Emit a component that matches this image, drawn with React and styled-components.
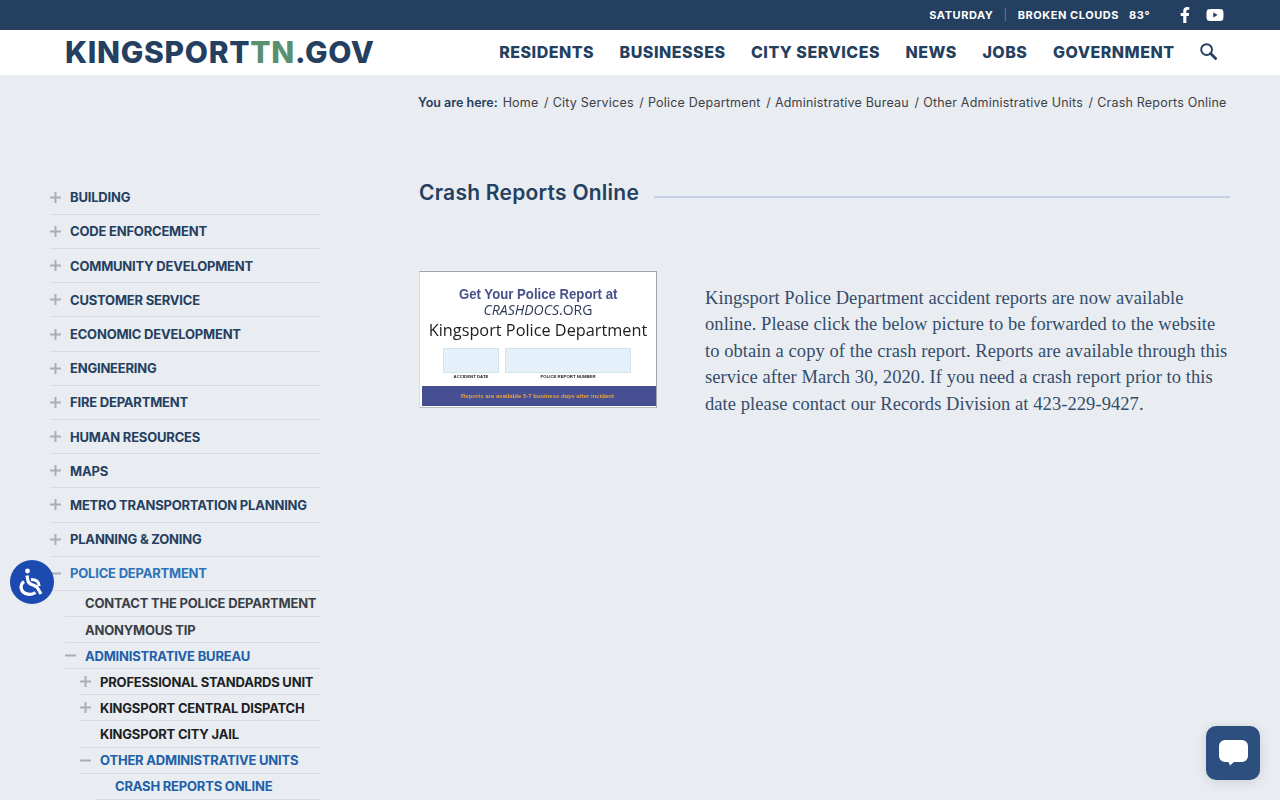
import styled, { createGlobalStyle } from "styled-components";
import { FaFacebookF, FaYoutube } from "react-icons/fa";

const sans = `Inter, "Noto Sans", "Liberation Sans", sans-serif`;

const GlobalStyle = createGlobalStyle`
  html, body {
    margin: 0;
    padding: 0;
    height: 800px;
    overflow: hidden;
    background: #e9ecf1;
    font-family: ${sans};
  }
`;

const navItems = ["RESIDENTS", "BUSINESSES", "CITY SERVICES", "NEWS", "JOBS", "GOVERNMENT"];

const crumbs = [
  "Home",
  "City Services",
  "Police Department",
  "Administrative Bureau",
  "Other Administrative Units",
  "Crash Reports Online",
];

const menu = [
  { label: "BUILDING", icon: "plus" },
  { label: "CODE ENFORCEMENT", icon: "plus" },
  { label: "COMMUNITY DEVELOPMENT", icon: "plus" },
  { label: "CUSTOMER SERVICE", icon: "plus" },
  { label: "ECONOMIC DEVELOPMENT", icon: "plus" },
  { label: "ENGINEERING", icon: "plus" },
  { label: "FIRE DEPARTMENT", icon: "plus" },
  { label: "HUMAN RESOURCES", icon: "plus" },
  { label: "MAPS", icon: "plus" },
  { label: "METRO TRANSPORTATION PLANNING", icon: "plus" },
  { label: "PLANNING & ZONING", icon: "plus" },
  { label: "POLICE DEPARTMENT", icon: "minus", active: true },
];

const subMenu = [
  { label: "CONTACT THE POLICE DEPARTMENT", level: 1, tone: "#3a3f47" },
  { label: "ANONYMOUS TIP", level: 1, tone: "#3a3f47" },
  { label: "ADMINISTRATIVE BUREAU", level: 1, icon: "minus", tone: "#2060a8" },
  { label: "PROFESSIONAL STANDARDS UNIT", level: 2, icon: "plus", tone: "#1c1f24" },
  { label: "KINGSPORT CENTRAL DISPATCH", level: 2, icon: "plus", tone: "#1c1f24" },
  { label: "KINGSPORT CITY JAIL", level: 2, tone: "#1c1f24" },
  { label: "OTHER ADMINISTRATIVE UNITS", level: 2, icon: "minus", tone: "#2060a8" },
  { label: "CRASH REPORTS ONLINE", level: 3, tone: "#2060a8" },
];

function Toggle({ icon }) {
  if (!icon) return <ToggleSlot />;
  return (
    <ToggleSlot>
      <svg width="11" height="11" viewBox="0 0 11 11">
        <rect x="0" y="4.5" width="11" height="2" fill="#a9afba" />
        {icon === "plus" && <rect x="4.5" y="0" width="2" height="11" fill="#a9afba" />}
      </svg>
    </ToggleSlot>
  );
}

export default function App() {
  return (
    <Page>
      <GlobalStyle />
      <TopBar>
        <Weather>
          <span>SATURDAY</span>
          <Pipe>|</Pipe>
          <span>BROKEN CLOUDS</span>
          <Temp>83°</Temp>
        </Weather>
        <Socials>
          <FaFacebookF size={16} />
          <FaYoutube size={18} />
        </Socials>
      </TopBar>

      <Header>
        <Logo>
          KINGSPORT<LogoAccent>TN</LogoAccent>.GOV
        </Logo>
        <Nav>
          {navItems.map((item) => (
            <NavLink key={item}>{item}</NavLink>
          ))}
          <SearchButton>
            <svg width="17" height="17" viewBox="0 0 17 17" fill="none" stroke="#243f5f">
              <circle cx="6.6" cy="6.6" r="5.4" strokeWidth="1.9" />
              <path d="M10.6 10.6L15.6 15.6" strokeWidth="2.8" strokeLinecap="round" />
            </svg>
          </SearchButton>
        </Nav>
      </Header>

      <Breadcrumb>
        <CrumbLead>You are here:</CrumbLead>
        {crumbs.map((crumb, i) => (
          <Crumb key={crumb}>
            {i > 0 && <CrumbSlash>/</CrumbSlash>}
            {crumb}
          </Crumb>
        ))}
      </Breadcrumb>

      <Body>
        <Sidebar>
          {menu.map((item) => (
            <MenuRow key={item.label}>
              <Toggle icon={item.icon} />
              <MenuLabel $active={item.active}>{item.label}</MenuLabel>
            </MenuRow>
          ))}
          {subMenu.map((item) => (
            <SubRow key={item.label} $level={item.level}>
              <Toggle icon={item.icon} />
              <SubLabel $tone={item.tone}>{item.label}</SubLabel>
            </SubRow>
          ))}
        </Sidebar>

        <Content>
          <TitleRow>
            <Title>Crash Reports Online</Title>
            <TitleRule />
          </TitleRow>
          <Article>
            <ReportCard>
              <CardHead>Get Your Police Report at</CardHead>
              <CardSite>
                <em>CRASHDOCS</em>.ORG
              </CardSite>
              <CardDept>Kingsport Police Department</CardDept>
              <CardFields>
                <CardField $width={56}>
                  <FieldBox />
                  <FieldCaption>ACCIDENT DATE</FieldCaption>
                </CardField>
                <CardField $width={126}>
                  <FieldBox />
                  <FieldCaption>POLICE REPORT NUMBER</FieldCaption>
                </CardField>
              </CardFields>
              <CardFooter>Reports are available 5-7 business days after incident</CardFooter>
            </ReportCard>
            <Copy>
              Kingsport Police Department accident reports are now available online. Please click
              the below picture to be forwarded to the website to obtain a copy of the crash
              report. Reports are available through this service after March 30, 2020. If you need
              a crash report prior to this date please contact our Records Division at
              423-229-9427.
            </Copy>
          </Article>
        </Content>
      </Body>

      <AccessButton>
        <svg width="44" height="44" viewBox="0 0 44 44" fill="none" stroke="#fff">
          <circle cx="17.5" cy="11" r="2.4" fill="#fff" stroke="none" />
          <path
            d="M17 15.5L18 21Q19 24 23 25L27 27L31 34"
            strokeWidth="3.2"
            strokeLinejoin="round"
          />
          <path d="M14 21.5C9.5 25 10 33 18 34.2C21 34.6 23.5 34 25.5 32.5" strokeWidth="3.2" />
          <path d="M21 19.5C26 19.5 29 22 29.2 26" strokeWidth="3" />
        </svg>
      </AccessButton>
      <ChatButton>
        <svg width="29" height="26" viewBox="0 0 29 26">
          <path
            d="M6 0h17a6 6 0 0 1 6 6v10a6 6 0 0 1-6 6h-8l-4 3.5-1.5-3.5H6a6 6 0 0 1-6-6V6a6 6 0 0 1 6-6z"
            fill="#fff"
          />
        </svg>
      </ChatButton>
    </Page>
  );
}

const Page = styled.div`
  width: 1280px;
  height: 800px;
  overflow: hidden;
  background: #e9ecf1;
`;

const TopBar = styled.div`
  height: 30px;
  background: #243f5f;
  color: #fff;
  display: flex;
  align-items: center;
  justify-content: flex-end;
  padding-right: 56px;
`;

const Weather = styled.div`
  display: flex;
  align-items: center;
  font-size: 11px;
  font-weight: 700;
  letter-spacing: 0.55px;
`;

const Pipe = styled.span`
  margin: 0 10px;
  color: #6f829a;
  font-weight: 400;
`;

const Temp = styled.span`
  margin-left: 10px;
`;

const Socials = styled.div`
  display: flex;
  align-items: center;
  gap: 13px;
  margin-left: 27px;
`;

const Header = styled.header`
  height: 45px;
  box-sizing: border-box;
  background: #fff;
  display: flex;
  align-items: center;
  justify-content: space-between;
  padding: 0 63px 2px 65px;
`;

const Logo = styled.div`
  font-size: 30px;
  font-weight: 800;
  color: #243f5f;
  letter-spacing: 0.7px;
`;

const LogoAccent = styled.span`
  color: #5a8f70;
`;

const Nav = styled.nav`
  display: flex;
  align-items: center;
  gap: 25.5px;
`;

const NavLink = styled.a`
  font-size: 16px;
  font-weight: 800;
  letter-spacing: 0.5px;
  color: #243f5f;
`;

const SearchButton = styled.span`
  display: flex;
`;

const Breadcrumb = styled.div`
  display: flex;
  align-items: center;
  height: 54px;
  padding-left: 418px;
  font-size: 12.5px;
  letter-spacing: 0.2px;
  color: #3c4148;
`;

const CrumbLead = styled.span`
  font-weight: 600;
  color: #243f5f;
  letter-spacing: 0;
  margin-right: 5px;
`;

const Crumb = styled.span`
  margin-right: 5.6px;
`;

const CrumbSlash = styled.span`
  margin: 0 4px 0 0;
`;

const Body = styled.main`
  display: grid;
  grid-template-columns: 270px 811px;
  column-gap: 99px;
  padding: 51px 0 0 50px;
`;

const Sidebar = styled.aside`
  display: flex;
  flex-direction: column;
  padding-top: 0.7px;
`;

const MenuRow = styled.div`
  height: 34.2px;
  box-sizing: border-box;
  display: flex;
  align-items: center;
  border-bottom: 1px solid #d6dae1;
`;

const ToggleSlot = styled.span`
  width: 20px;
  flex: none;
  display: flex;
`;

const MenuLabel = styled.span`
  font-size: 13px;
  font-weight: 700;
  letter-spacing: -0.2px;
  color: ${(p) => (p.$active ? "#2d72b8" : "#243f5f")};
`;

const SubRow = styled.div`
  height: 26.1px;
  box-sizing: border-box;
  display: flex;
  align-items: center;
  margin-left: ${(p) => p.$level * 15}px;
  border-bottom: 1px solid #d6dae1;
`;

const SubLabel = styled.span`
  font-size: 13px;
  font-weight: 700;
  letter-spacing: -0.2px;
  white-space: nowrap;
  color: ${(p) => p.$tone};
`;

const Content = styled.section`
  display: flex;
  flex-direction: column;
`;

const TitleRow = styled.div`
  display: flex;
  align-items: center;
  gap: 15px;
  height: 24px;
`;

const Title = styled.h1`
  margin: 0;
  font-size: 21px;
  font-weight: 600;
  letter-spacing: 0.25px;
  color: #243f5f;
  white-space: nowrap;
`;

const TitleRule = styled.div`
  flex: 1;
  height: 2px;
  margin-top: 10px;
  background: #c5cfe2;
`;

const Article = styled.div`
  display: flex;
  gap: 48px;
  margin-top: 67px;
`;

const ReportCard = styled.div`
  width: 238px;
  height: 137px;
  flex: none;
  box-sizing: border-box;
  background: #fff;
  border: 1px solid #9ea3ad;
  border-left-color: #d9dce2;
  border-bottom-color: #b8bcc5;
  display: flex;
  flex-direction: column;
  align-items: center;
  padding-top: 14px;
  font-family: "Open Sans", sans-serif;
  filter: blur(0.25px);
`;

const CardHead = styled.div`
  font-family: "Liberation Sans", sans-serif;
  font-size: 15.5px;
  font-weight: 700;
  color: #47528a;
  line-height: 16px;
  transform: scaleX(0.85);
  white-space: nowrap;
`;

const CardSite = styled.div`
  font-size: 14px;
  color: #2f3a58;
  line-height: 16px;
`;

const CardDept = styled.div`
  font-size: 16.3px;
  color: #1d1d1d;
  line-height: 24px;
  white-space: nowrap;
`;

const CardFields = styled.div`
  display: flex;
  gap: 6px;
  margin-top: 6px;
  margin-right: 2px;
`;

const CardField = styled.div`
  width: ${(p) => p.$width}px;
  display: flex;
  flex-direction: column;
  align-items: center;
`;

const FieldBox = styled.div`
  width: 100%;
  height: 25px;
  box-sizing: border-box;
  background: #e4f1fb;
  border: 1px solid #d3e3ea;
`;

const FieldCaption = styled.div`
  font-family: "Liberation Sans", sans-serif;
  font-size: 4.3px;
  font-weight: 700;
  color: #222;
  line-height: 7px;
  white-space: nowrap;
`;

const CardFooter = styled.div`
  margin: auto 0 1px 2px;
  padding-right: 3px;
  align-self: stretch;
  height: 20px;
  background: #464f92;
  color: #e8a33c;
  font-family: "Liberation Sans", sans-serif;
  font-size: 6px;
  font-weight: 700;
  display: flex;
  align-items: center;
  justify-content: center;
  white-space: nowrap;
`;

const Copy = styled.p`
  margin: 14px 0 0;
  font-family: "Liberation Serif", serif;
  font-size: 18.5px;
  letter-spacing: 0.07px;
  line-height: 26.4px;
  color: #354c6b;
`;

const AccessButton = styled.div`
  position: fixed;
  left: 10px;
  top: 560px;
  width: 44px;
  height: 44px;
  border-radius: 50%;
  background: #1c4ab0;
  display: flex;
`;

const ChatButton = styled.div`
  position: fixed;
  left: 1206px;
  top: 726px;
  width: 54px;
  height: 54px;
  border-radius: 10px;
  background: #2c4f7f;
  box-shadow: 0 2px 12px rgba(0, 0, 0, 0.12);
  display: flex;
  align-items: center;
  justify-content: center;
`;
